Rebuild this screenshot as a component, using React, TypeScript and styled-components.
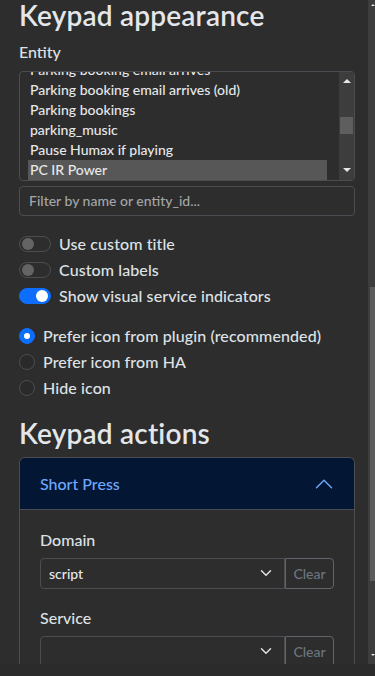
import React from "react";
import styled, { createGlobalStyle } from "styled-components";

const GlobalStyle = createGlobalStyle`
  html, body { margin: 0; padding: 0; background: #2d2d2d; }
  body {
    font-family: Lato, "Noto Sans", sans-serif;
    font-weight: 500;
    color: #dee2e6;
    font-size: 16px;
    line-height: 1.5;
  }
  * { box-sizing: border-box; }
`;

const Page = styled.div`
  width: 375px;
  height: 676px;
  display: flex;
  flex-direction: column;
  background: #2d2d2d;
  overflow: hidden;
`;

const Main = styled.div`
  height: 664px;
  display: flex;
  flex-direction: row;
`;

const Footer = styled.div`
  flex: 1;
  background: #2b2b2b;
`;

const Viewport = styled.div`
  flex: 1;
  overflow: hidden;
`;

const Content = styled.div`
  padding: 0 13px 0 19px;
  display: flex;
  flex-direction: column;
`;

const Heading = styled.h3`
  margin: 0 0 9px;
  font-size: 28px;
  font-weight: 600;
  line-height: 1.1;
  letter-spacing: 0.2px;
  color: #e4e7ea;
`;

const Label = styled.label`
  display: block;
  font-size: 16px;
  line-height: 24px;
  margin-bottom: 7px;
`;

const FieldLabel = styled(Label)`
  margin-bottom: 6px;
`;

/* ---- entity list box ---- */
const ListBox = styled.div`
  height: 110px;
  border: 1px solid #4a4d52;
  border-radius: 4px;
  display: flex;
  overflow: hidden;
`;

const ListRows = styled.div`
  flex: 1;
  padding: 0 12px 0 8px;
  overflow: hidden;
`;

const ListInner = styled.div`
  margin-top: -12px;
`;

const ListRow = styled.div<{ $selected?: boolean }>`
  height: 20px;
  line-height: 20px;
  font-size: 14px;
  padding-left: 2px;
  white-space: nowrap;
  color: #e6e8ea;
  background: ${(p) => (p.$selected ? "#575757" : "transparent")};
`;

const ListTrack = styled.div`
  width: 15px;
  background: #3d3d3d;
  display: flex;
  flex-direction: column;
  align-items: center;
  border-top-right-radius: 3px;
  border-bottom-right-radius: 3px;
`;

const ArrowUp = styled.div<{ $size?: number }>`
  width: 0;
  height: 0;
  border-left: ${(p) => p.$size ?? 4}px solid transparent;
  border-right: ${(p) => p.$size ?? 4}px solid transparent;
  border-bottom: ${(p) => Math.round((p.$size ?? 4) * 0.9)}px solid #e8e8e8;
`;

const ArrowDown = styled.div<{ $size?: number }>`
  width: 0;
  height: 0;
  border-left: ${(p) => p.$size ?? 4}px solid transparent;
  border-right: ${(p) => p.$size ?? 4}px solid transparent;
  border-top: ${(p) => Math.round((p.$size ?? 4) * 0.9)}px solid #e8e8e8;
`;

const ListTopArrow = styled.div`
  margin-top: 7px;
`;

const ListThumb = styled.div`
  margin-top: 34px;
  width: 13px;
  height: 17px;
  background: #5e5e5e;
`;

const ListBottomArrow = styled.div`
  margin-top: auto;
  margin-bottom: 8px;
`;

const FilterInput = styled.input`
  margin-top: 5px;
  height: 30px;
  width: 100%;
  border: 1px solid #4a4d52;
  border-radius: 4px;
  background: transparent;
  padding: 0 9px;
  font-family: Lato, "Noto Sans", sans-serif;
  font-weight: 500;
  font-size: 14px;
  color: #dee2e6;
  outline: none;
  &::placeholder {
    color: #a3a5a8;
  }
`;

/* ---- switches & radios ---- */
const OptionList = styled.div<{ $top: number }>`
  margin-top: ${(p) => p.$top}px;
  display: flex;
  flex-direction: column;
`;

const OptionRow = styled.div`
  height: 26px;
  display: flex;
  align-items: center;
  font-size: 16px;
  line-height: 26px;
  letter-spacing: 0.1px;
  white-space: nowrap;
`;

const SwitchTrack = styled.span<{ $on?: boolean }>`
  width: 32px;
  height: 16px;
  border-radius: 8px;
  margin-right: 8px;
  display: flex;
  align-items: center;
  padding: 0 2px;
  justify-content: ${(p) => (p.$on ? "flex-end" : "flex-start")};
  background: ${(p) => (p.$on ? "#0d6efd" : "transparent")};
  border: 1px solid ${(p) => (p.$on ? "#0d6efd" : "#4a4d52")};
`;

const SwitchKnob = styled.span<{ $on?: boolean }>`
  width: 12px;
  height: 12px;
  border-radius: 50%;
  background: ${(p) => (p.$on ? "#ffffff" : "#646464")};
`;

const RadioCircle = styled.span<{ $on?: boolean }>`
  width: 16px;
  height: 16px;
  border-radius: 50%;
  margin-right: 8px;
  display: flex;
  align-items: center;
  justify-content: center;
  background: ${(p) => (p.$on ? "#0d6efd" : "#2a2a2a")};
  border: 1px solid ${(p) => (p.$on ? "#0d6efd" : "#4a4d52")};
  &::after {
    content: "";
    width: 6px;
    height: 6px;
    border-radius: 50%;
    background: ${(p) => (p.$on ? "#ffffff" : "transparent")};
  }
`;

const ActionsHeading = styled(Heading)`
  margin-top: 17px;
  margin-bottom: 8px;
`;

/* ---- accordion ---- */
const Accordion = styled.div`
  border: 1px solid #4a4d52;
  border-bottom: none;
  border-radius: 6px 6px 0 0;
  overflow: hidden;
`;

const AccHeader = styled.div`
  height: 52px;
  display: flex;
  align-items: center;
  justify-content: space-between;
  padding: 2px 20px 0;
  background: #031633;
  color: #6ea8fe;
  font-size: 16px;
  border-bottom: 1px solid #4a4d52;
`;

const AccBody = styled.div`
  padding: 18px 20px 16px;
`;

const InputGroup = styled.div`
  display: flex;
  height: 31px;
  margin-bottom: 17px;
`;

const SelectBox = styled.div`
  flex: 1;
  display: flex;
  align-items: center;
  justify-content: space-between;
  padding: 0 12px 0 8px;
  border: 1px solid #4a4d52;
  border-radius: 4px 0 0 4px;
  font-size: 14px;
  color: #e6e8ea;
`;

const ClearButton = styled.button`
  width: 49px;
  height: 31px;
  padding: 0;
  border: 1px solid #5f656b;
  border-radius: 0 4px 4px 0;
  background: transparent;
  color: #6c757d;
  font-family: Lato, "Noto Sans", sans-serif;
  font-weight: 500;
  font-size: 14px;
`;

/* ---- page scrollbar ---- */
const PageTrack = styled.div`
  width: 7px;
  background: #3d3d3d;
  display: flex;
  flex-direction: column;
  align-items: center;
`;

const PageTopArrow = styled.div`
  margin-top: 4px;
  padding-left: 2px;
`;

const PageThumb = styled.div`
  margin-top: 281px;
  margin-left: 2px;
  width: 5px;
  height: 294px;
  background: #5c5c5c;
`;

const PageBottomArrow = styled.div`
  margin-top: auto;
  margin-bottom: 8px;
  padding-left: 2px;
`;

const Chevron = ({ up, color, size, width }: { up?: boolean; color: string; size: number; width: number }) => (
  <svg width={size} height={size} viewBox="0 0 16 16" fill="none">
    <path
      d={up ? "M2 11L8 5L14 11" : "M2 5L8 11L14 5"}
      stroke={color}
      strokeWidth={width}
      strokeLinecap="round"
      strokeLinejoin="round"
    />
  </svg>
);

const entities = [
  "Parking booking email arrives",
  "Parking booking email arrives (old)",
  "Parking bookings",
  "parking_music",
  "Pause Humax if playing",
  "PC IR Power",
];

export default function App() {
  return (
    <>
      <GlobalStyle />
      <Page>
        <Main>
          <Viewport>
            <Content>
              <Heading>Keypad appearance</Heading>
              <Label>Entity</Label>
              <ListBox>
                <ListRows>
                  <ListInner>
                    {entities.map((e) => (
                      <ListRow key={e} $selected={e === "PC IR Power"}>
                        {e}
                      </ListRow>
                    ))}
                  </ListInner>
                </ListRows>
                <ListTrack>
                  <ListTopArrow>
                    <ArrowUp $size={4} />
                  </ListTopArrow>
                  <ListThumb />
                  <ListBottomArrow>
                    <ArrowDown $size={4} />
                  </ListBottomArrow>
                </ListTrack>
              </ListBox>
              <FilterInput placeholder="Filter by name or entity_id..." readOnly />

              <OptionList $top={15}>
                <OptionRow>
                  <SwitchTrack>
                    <SwitchKnob />
                  </SwitchTrack>
                  Use custom title
                </OptionRow>
                <OptionRow>
                  <SwitchTrack>
                    <SwitchKnob />
                  </SwitchTrack>
                  Custom labels
                </OptionRow>
                <OptionRow>
                  <SwitchTrack $on>
                    <SwitchKnob $on />
                  </SwitchTrack>
                  Show visual service indicators
                </OptionRow>
              </OptionList>

              <OptionList $top={14}>
                <OptionRow>
                  <RadioCircle $on />
                  Prefer icon from plugin (recommended)
                </OptionRow>
                <OptionRow>
                  <RadioCircle />
                  Prefer icon from HA
                </OptionRow>
                <OptionRow>
                  <RadioCircle />
                  Hide icon
                </OptionRow>
              </OptionList>

              <ActionsHeading>Keypad actions</ActionsHeading>
              <Accordion>
                <AccHeader>
                  Short Press
                  <Chevron up color="#6ea8fe" size={20} width={1.1} />
                </AccHeader>
                <AccBody>
                  <FieldLabel>Domain</FieldLabel>
                  <InputGroup>
                    <SelectBox>
                      script
                      <Chevron color="#dee2e6" size={12} width={2} />
                    </SelectBox>
                    <ClearButton>Clear</ClearButton>
                  </InputGroup>
                  <FieldLabel>Service</FieldLabel>
                  <InputGroup>
                    <SelectBox>
                      <span />
                      <Chevron color="#dee2e6" size={12} width={2} />
                    </SelectBox>
                    <ClearButton>Clear</ClearButton>
                  </InputGroup>
                </AccBody>
              </Accordion>
            </Content>
          </Viewport>
          <PageTrack>
            <PageTopArrow>
              <ArrowUp $size={2} />
            </PageTopArrow>
            <PageThumb />
            <PageBottomArrow>
              <ArrowDown $size={2} />
            </PageBottomArrow>
          </PageTrack>
        </Main>
        <Footer />
      </Page>
    </>
  );
}
